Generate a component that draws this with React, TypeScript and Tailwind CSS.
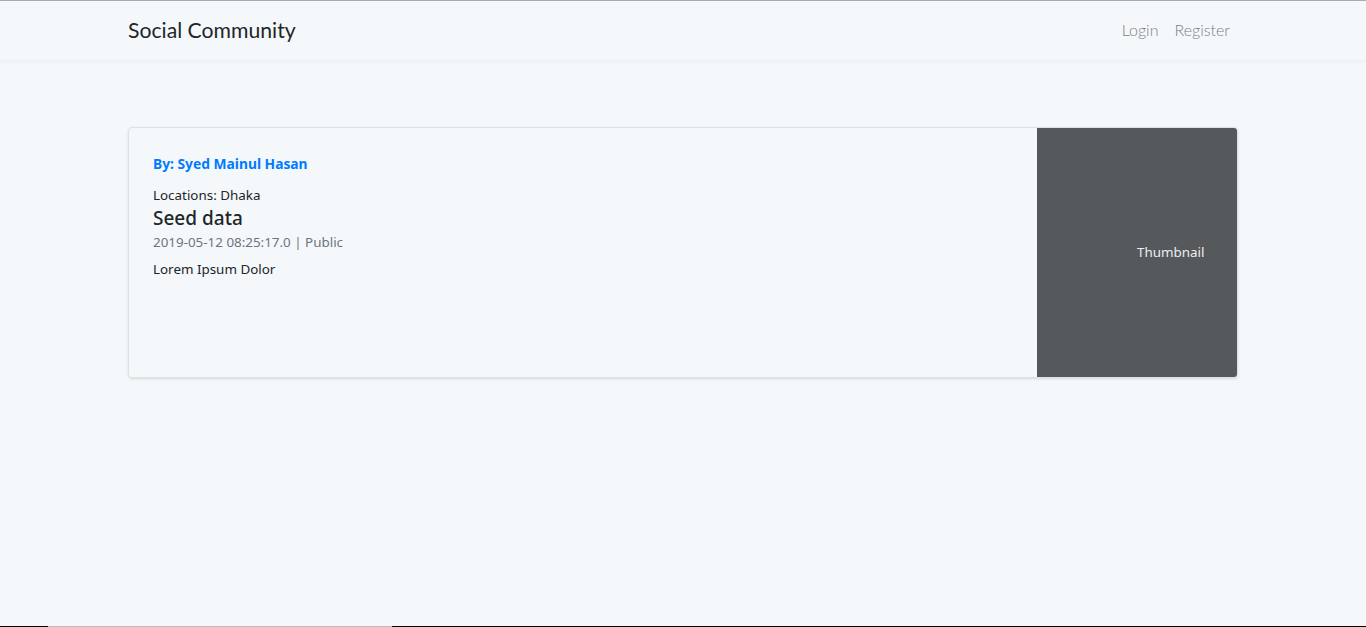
export default function App() {
  return (
    <div className="relative flex h-[627px] flex-col overflow-hidden border-t border-[#aaaaaa] bg-[#f5f8fa] font-['Noto_Sans',sans-serif] text-[#212529]">
      <nav className="h-[59px] shrink-0 bg-[#f5f8fa] shadow-[0_2px_4px_rgba(0,0,0,0.04)]">
        <div className="mx-auto flex h-full w-[1140px] items-center justify-between px-[15px] pb-[2px]">
          <a className="font-['Lato',sans-serif] text-[21.2px] font-normal leading-[28px] text-[#212529]">Social Community</a>
          <div className="flex items-center font-['Lato',sans-serif] text-[16px] font-light text-[#7b7f83]">
            <a className="px-2">Login</a>
            <a className="px-2">Register</a>
          </div>
        </div>
      </nav>

      <main className="mx-auto mt-[67px] w-[1140px] px-[15px]">
        <div className="flex h-[251px] overflow-hidden rounded border border-[#dfe1e3] shadow-sm">
          <div className="flex-1 px-6 pt-[26px] text-[13.4px] leading-[20px]">
            <p className="text-[13.8px] font-bold text-[#007bff]">By: Syed Mainul Hasan</p>
            <p className="mt-[11px]">Locations: Dhaka</p>
            <h3 className="text-[19px] font-medium leading-[27px]">Seed data</h3>
            <p className="text-[#6c757d]">2019-05-12 08:25:17.0 | Public</p>
            <p className="mt-[7px]">Lorem Ipsum Dolor</p>
          </div>
          <div className="flex w-[200px] shrink-0 items-center bg-[#55595c] pl-[100px] text-[13.4px] text-[#eceeef]">
            Thumbnail
          </div>
        </div>
      </main>

      <div className="absolute bottom-0 left-0 flex h-px w-full bg-black">
        <div className="ml-[48px] w-[344px] bg-[#bdbdbd]" />
      </div>
    </div>
  )
}
